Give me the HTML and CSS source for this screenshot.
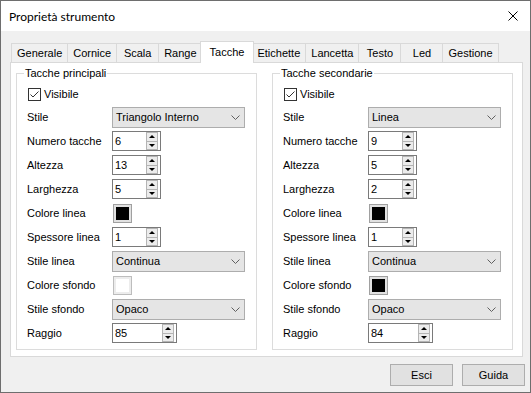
FILE: index.html
```html
<!DOCTYPE html>
<html lang="it">
<head>
    <meta charset="UTF-8">
    <title>Proprietà strumento</title>
    <link rel="stylesheet" href="styles.css">
</head>
<body>
    <div class="window">
        <div class="titlebar">
            <span class="title">Proprietà strumento</span>
            <svg class="close" width="10" height="10" viewBox="0 0 10 10">
                <path d="M0.5 0.5 L9.5 9.5 M9.5 0.5 L0.5 9.5" stroke="#000" stroke-width="1" fill="none"/>
            </svg>
        </div>

        <div class="client">
            <div class="tabs">
                <div class="tab">Generale</div>
                <div class="tab">Cornice</div>
                <div class="tab">Scala</div>
                <div class="tab">Range</div>
                <div class="tab active">Tacche</div>
                <div class="tab">Etichette</div>
                <div class="tab">Lancetta</div>
                <div class="tab">Testo</div>
                <div class="tab">Led</div>
                <div class="tab">Gestione</div>
            </div>

            <div class="page">
                <!-- Tacche principali -->
                <fieldset class="group">
                    <legend>Tacche principali</legend>
                    <div class="check-row">
                        <span class="checkbox">
                            <svg width="11" height="11" viewBox="0 0 11 11"><path d="M1.5 5.5 L4 8 L9.5 2.5" stroke="#333" stroke-width="1" fill="none"/></svg>
                        </span>
                        Visibile
                    </div>
                    <div class="row">
                        <span class="label">Stile</span>
                        <div class="combo">
                            <span>Triangolo Interno</span>
                            <svg width="9" height="5" viewBox="0 0 9 5"><polyline points="0.5,0.5 4.5,4.5 8.5,0.5" stroke="#606060" fill="none"/></svg>
                        </div>
                    </div>
                    <div class="row">
                        <span class="label">Numero tacche</span>
                        <div class="spin"><span class="spin-val">6</span><span class="spin-btns"><i class="up"></i><i class="down"></i></span></div>
                    </div>
                    <div class="row">
                        <span class="label">Altezza</span>
                        <div class="spin"><span class="spin-val">13</span><span class="spin-btns"><i class="up"></i><i class="down"></i></span></div>
                    </div>
                    <div class="row">
                        <span class="label">Larghezza</span>
                        <div class="spin"><span class="spin-val">5</span><span class="spin-btns"><i class="up"></i><i class="down"></i></span></div>
                    </div>
                    <div class="row">
                        <span class="label">Colore linea</span>
                        <div class="swatch"><div class="swatch-color black"></div></div>
                    </div>
                    <div class="row">
                        <span class="label">Spessore linea</span>
                        <div class="spin"><span class="spin-val">1</span><span class="spin-btns"><i class="up"></i><i class="down"></i></span></div>
                    </div>
                    <div class="row">
                        <span class="label">Stile linea</span>
                        <div class="combo">
                            <span>Continua</span>
                            <svg width="9" height="5" viewBox="0 0 9 5"><polyline points="0.5,0.5 4.5,4.5 8.5,0.5" stroke="#606060" fill="none"/></svg>
                        </div>
                    </div>
                    <div class="row">
                        <span class="label">Colore sfondo</span>
                        <div class="swatch light"><div class="swatch-color white"></div></div>
                    </div>
                    <div class="row">
                        <span class="label">Stile sfondo</span>
                        <div class="combo">
                            <span>Opaco</span>
                            <svg width="9" height="5" viewBox="0 0 9 5"><polyline points="0.5,0.5 4.5,4.5 8.5,0.5" stroke="#606060" fill="none"/></svg>
                        </div>
                    </div>
                    <div class="row">
                        <span class="label">Raggio</span>
                        <div class="spin wide"><span class="spin-val">85</span><span class="spin-btns"><i class="up"></i><i class="down"></i></span></div>
                    </div>
                </fieldset>

                <!-- Tacche secondarie -->
                <fieldset class="group">
                    <legend>Tacche secondarie</legend>
                    <div class="check-row">
                        <span class="checkbox">
                            <svg width="11" height="11" viewBox="0 0 11 11"><path d="M1.5 5.5 L4 8 L9.5 2.5" stroke="#333" stroke-width="1" fill="none"/></svg>
                        </span>
                        Visibile
                    </div>
                    <div class="row">
                        <span class="label">Stile</span>
                        <div class="combo">
                            <span>Linea</span>
                            <svg width="9" height="5" viewBox="0 0 9 5"><polyline points="0.5,0.5 4.5,4.5 8.5,0.5" stroke="#606060" fill="none"/></svg>
                        </div>
                    </div>
                    <div class="row">
                        <span class="label">Numero tacche</span>
                        <div class="spin"><span class="spin-val">9</span><span class="spin-btns"><i class="up"></i><i class="down"></i></span></div>
                    </div>
                    <div class="row">
                        <span class="label">Altezza</span>
                        <div class="spin"><span class="spin-val">5</span><span class="spin-btns"><i class="up"></i><i class="down"></i></span></div>
                    </div>
                    <div class="row">
                        <span class="label">Larghezza</span>
                        <div class="spin"><span class="spin-val">2</span><span class="spin-btns"><i class="up"></i><i class="down"></i></span></div>
                    </div>
                    <div class="row">
                        <span class="label">Colore linea</span>
                        <div class="swatch"><div class="swatch-color black"></div></div>
                    </div>
                    <div class="row">
                        <span class="label">Spessore linea</span>
                        <div class="spin"><span class="spin-val">1</span><span class="spin-btns"><i class="up"></i><i class="down"></i></span></div>
                    </div>
                    <div class="row">
                        <span class="label">Stile linea</span>
                        <div class="combo">
                            <span>Continua</span>
                            <svg width="9" height="5" viewBox="0 0 9 5"><polyline points="0.5,0.5 4.5,4.5 8.5,0.5" stroke="#606060" fill="none"/></svg>
                        </div>
                    </div>
                    <div class="row">
                        <span class="label">Colore sfondo</span>
                        <div class="swatch"><div class="swatch-color black"></div></div>
                    </div>
                    <div class="row">
                        <span class="label">Stile sfondo</span>
                        <div class="combo">
                            <span>Opaco</span>
                            <svg width="9" height="5" viewBox="0 0 9 5"><polyline points="0.5,0.5 4.5,4.5 8.5,0.5" stroke="#606060" fill="none"/></svg>
                        </div>
                    </div>
                    <div class="row">
                        <span class="label">Raggio</span>
                        <div class="spin wide"><span class="spin-val">84</span><span class="spin-btns"><i class="up"></i><i class="down"></i></span></div>
                    </div>
                </fieldset>
            </div>

            <div class="footer">
                <button class="btn">Esci</button>
                <button class="btn">Guida</button>
            </div>
        </div>
    </div>
</body>
</html>
```

FILE: styles.css
```css
* {
    margin: 0;
    padding: 0;
    box-sizing: border-box;
}

body {
    background: #f0f0f0;
    font-family: 'Liberation Sans', Arial, sans-serif;
    font-size: 11px;
    color: #000;
}

.window {
    width: 531px;
    height: 393px;
    border: 1px solid #6e6e6e;
    background: #f0f0f0;
    display: flex;
    flex-direction: column;
}

/* Barra del titolo */
.titlebar {
    height: 30px;
    flex-shrink: 0;
    background: #fff;
    display: flex;
    align-items: center;
    justify-content: space-between;
    padding: 0 12px 0 8px;
    font-family: 'Lato', sans-serif;
    font-size: 12px;
}

.close {
    display: block;
}

.client {
    flex: 1;
    padding: 10px 0 0 9px;
}

/* Schede */
.tabs {
    display: flex;
    align-items: flex-end;
    height: 21px;
    padding-left: 1px;
}

.tab {
    height: 19px;
    min-width: 43px;
    padding: 0 5px;
    border: 1px solid #d9d9d9;
    border-bottom: none;
    background: #f0f0f0;
    display: flex;
    align-items: center;
    justify-content: center;
    white-space: nowrap;
}

.tab + .tab {
    margin-left: -1px;
}

.tab.active {
    position: relative;
    z-index: 1;
    height: 22px;
    margin: 0 -2px -1px -3px;
    padding: 0 9px 2px;
    background: #fff;
}

.page {
    width: 513px;
    height: 295px;
    border: 1px solid #d9d9d9;
    background: #fff;
    display: flex;
    gap: 15px;
    padding: 3px 0 0 5px;
}

/* Gruppi */
.group {
    width: 241px;
    height: 284px;
    min-width: 0;
    border: 1px solid #dcdcdc;
    padding: 3px 10px 0;
}

.group legend {
    padding: 0 1px;
    margin-left: -3px;
    line-height: 14px;
}

.check-row {
    height: 22px;
    display: flex;
    align-items: center;
}

.checkbox {
    width: 13px;
    height: 13px;
    border: 1px solid #333;
    background: #fff;
    margin: 0 3px 0 1px;
    display: flex;
}

.row {
    height: 24px;
    display: flex;
    align-items: center;
}

.label {
    width: 85px;
    white-space: nowrap;
}

.combo {
    width: 133px;
    height: 21px;
    border: 1px solid #adadad;
    background: #e5e5e5;
    display: flex;
    align-items: center;
    justify-content: space-between;
    padding: 0 4px 0 3px;
}

/* Campi numerici */
.spin {
    width: 49px;
    height: 20px;
    border: 1px solid #7a7a7a;
    background: #fff;
    display: flex;
    align-items: center;
    padding-left: 2px;
}

.spin.wide {
    width: 65px;
}

.spin-val {
    flex: 1;
}

.spin-btns {
    width: 12px;
    align-self: stretch;
    margin-right: 2px;
    border: 1px solid #b4b4b4;
    background: #ececec;
    display: flex;
    flex-direction: column;
}

.spin-btns i {
    flex: 1;
    display: flex;
    align-items: center;
    justify-content: center;
}

.spin-btns i + i {
    border-top: 1px solid #b4b4b4;
}

.spin-btns i::before {
    content: "";
    border-left: 3px solid transparent;
    border-right: 3px solid transparent;
}

.spin-btns .up::before {
    border-bottom: 3px solid #000;
}

.spin-btns .down::before {
    border-top: 3px solid #000;
}

/* Colori */
.swatch {
    width: 19px;
    height: 19px;
    margin-left: 1px;
    border: 1px solid #a0a0a0;
    background: #e1e1e1;
    padding: 2px;
}

.swatch.light {
    border-color: #bdbdbd;
    background: #ececec;
}

.swatch-color {
    width: 100%;
    height: 100%;
}

.swatch-color.black {
    background: #000;
}

.swatch-color.white {
    background: #fff;
}

/* Pulsanti */
.footer {
    display: flex;
    justify-content: flex-end;
    gap: 9px;
    margin-top: 7px;
    padding-right: 5px;
}

.btn {
    width: 63px;
    height: 22px;
    border: 1px solid #adadad;
    background: #e1e1e1;
    font-family: 'Liberation Sans', Arial, sans-serif;
    font-size: 11px;
    color: #000;
}
```
